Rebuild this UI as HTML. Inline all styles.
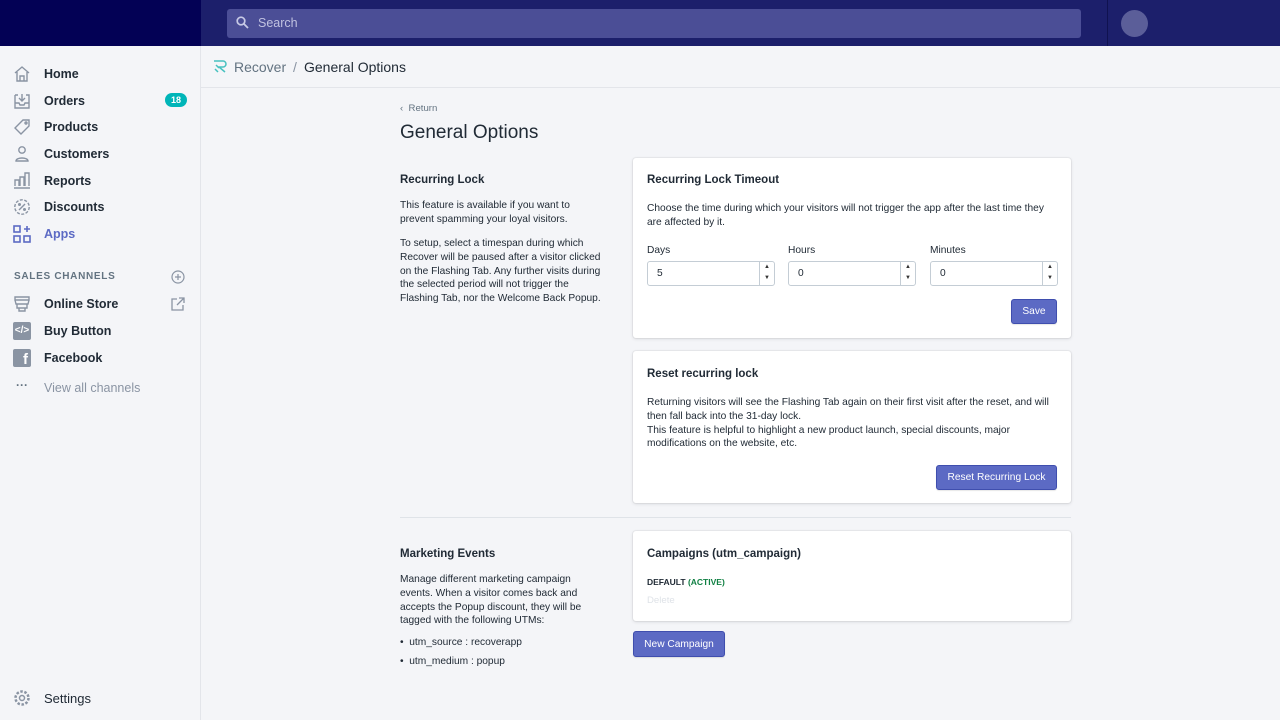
<!DOCTYPE html>
<html><head><meta charset="utf-8"><style>
*{box-sizing:border-box;margin:0;padding:0}
body{width:1280px;height:720px;overflow:hidden;background:#f4f5f8;font-family:"Liberation Sans",sans-serif;color:#212b36;position:relative}
.a{position:absolute}
.top{left:0;top:0;width:1280px;height:46px;background:#1c1f6b}
.topl{left:0;top:0;width:201px;height:46px;background:#030155}
.search{left:227px;top:9px;width:854px;height:29px;background:#4b4e96;border-radius:3px;color:#c0c2e0;font-size:12.5px;line-height:29px;padding-left:31px}
.side{left:0;top:46px;width:201px;height:674px;border-right:1px solid #e3e5ea;background:#f4f5f8}
.nav{left:44px;font-size:12.5px;font-weight:bold;color:#212b36}
.ic{left:13px;width:18px;height:18px}
.hdr{left:201px;top:46px;width:1079px;height:42px;border-bottom:1px solid #e3e5ea}
.card{background:#fff;left:633px;width:438px;border-radius:3px;box-shadow:0 0 0 1px rgba(63,63,68,.05),0 1px 3px rgba(63,63,68,.15)}
.h{font-size:11.5px;font-weight:bold;color:#212b36}
.p{font-size:10.2px;line-height:13.8px;color:#212b36}
.btn{background:#5c6ac4;color:#fff;font-size:10.2px;text-align:center;border-radius:3px;border:1px solid #3f4eae;box-shadow:0 1px 1px rgba(0,0,0,.1)}
.inp{width:128px;height:25px;border:1px solid #c4cdd5;border-radius:3px;font-size:10.2px;line-height:23px;padding-left:9px;background:#fff}
.sp{position:absolute;right:0;top:0;width:15px;height:23px;border-left:1px solid #c4cdd5;font-size:6px;line-height:11px;text-align:center;color:#333}
.lab{font-size:10.2px}
</style></head><body>
<div class="a top"></div><div class="a topl"></div>
<div class="a search">Search</div>
<svg class="a" style="left:236px;top:16px" width="13" height="13" viewBox="0 0 13 13"><circle cx="5" cy="5" r="3.8" fill="none" stroke="#c8cae6" stroke-width="1.7"/><path d="M8 8l4 4" stroke="#c8cae6" stroke-width="1.8"/></svg>
<div class="a" style="left:1107px;top:0;width:1px;height:46px;background:#101250"></div>
<div class="a" style="left:1121px;top:10px;width:27px;height:27px;border-radius:50%;background:#5b5e99"></div>

<div class="a side"></div>
<svg class="a ic" style="top:65px" viewBox="0 0 18 18" fill="none" stroke="#8a94a3" stroke-width="1.4"><path d="M2 8L9 2l7 6M4 7v9h10V7M7 16v-5h4v5"/></svg>
<div class="a nav" style="top:67px">Home</div>
<svg class="a ic" style="top:92px" viewBox="0 0 18 18" fill="none" stroke="#8a94a3" stroke-width="1.4"><path d="M2 3h3M13 3h3v13H2V3M2 11h4l1 2h4l1-2h4M9 2v7M6 6l3 3 3-3"/></svg>
<div class="a nav" style="top:94px">Orders</div>
<div class="a" style="left:165px;top:93px;width:22px;height:14px;border-radius:7px;background:#00b5b8;color:#fff;font-size:9px;font-weight:bold;text-align:center;line-height:14px">18</div>
<svg class="a ic" style="top:118px" viewBox="0 0 18 18" fill="none" stroke="#8a94a3" stroke-width="1.4"><path d="M10 2h6v6l-8 8-6-6z"/><circle cx="13" cy="5" r="1"/></svg>
<div class="a nav" style="top:120px">Products</div>
<svg class="a ic" style="top:145px" viewBox="0 0 18 18" fill="none" stroke="#8a94a3" stroke-width="1.4"><circle cx="9" cy="5" r="3.2"/><path d="M3 16c0-4 12-4 12 0z"/></svg>
<div class="a nav" style="top:147px">Customers</div>
<svg class="a ic" style="top:171px" viewBox="0 0 18 18" fill="none" stroke="#8a94a3" stroke-width="1.4"><path d="M1 17h16M2 15V9h4v6M7 15V6h4v9M12 15V2h4v13"/></svg>
<div class="a nav" style="top:174px">Reports</div>
<svg class="a ic" style="top:198px" viewBox="0 0 18 18" fill="none" stroke="#8a94a3" stroke-width="1.4"><circle cx="9" cy="9" r="7.2" stroke-dasharray="3 1.5"/><path d="M6 12l6-6"/><circle cx="6.5" cy="6.5" r=".8"/><circle cx="11.5" cy="11.5" r=".8"/></svg>
<div class="a nav" style="top:200px">Discounts</div>
<svg class="a ic" style="top:225px" viewBox="0 0 18 18" fill="none" stroke="#5c6ac4" stroke-width="1.6"><rect x="1" y="1" width="6" height="6"/><rect x="1" y="11" width="6" height="6"/><rect x="11" y="11" width="6" height="6"/><path d="M14 1v6M11 4h6"/></svg>
<div class="a nav" style="top:227px;color:#5c6ac4">Apps</div>
<div class="a" style="left:14px;top:271px;font-size:10px;font-weight:bold;letter-spacing:.7px;color:#637381">SALES CHANNELS</div>
<svg class="a" style="left:171px;top:270px" width="14" height="14" viewBox="0 0 14 14" fill="none" stroke="#8a94a3" stroke-width="1.2"><circle cx="7" cy="7" r="6"/><path d="M7 4v6M4 7h6"/></svg>
<svg class="a ic" style="top:295px" viewBox="0 0 18 18" fill="none" stroke="#8a94a3" stroke-width="1.4"><path d="M2 2h14v3H2zM2 5l1 4h12l1-4M4 9v4h10V9M6 13v3h6v-3"/></svg>
<div class="a nav" style="top:297px">Online Store</div>
<svg class="a" style="left:171px;top:297px" width="14" height="14" viewBox="0 0 14 14" fill="none" stroke="#8a94a3" stroke-width="1.3"><path d="M6 2H1v11h11V8M8 1h5v5M13 1L6 8"/></svg>
<div class="a" style="left:13px;top:322px;width:18px;height:18px;background:#8a94a3;border-radius:2px;color:#fff;font-size:10px;font-weight:bold;text-align:center;line-height:18px">&lt;/&gt;</div>
<div class="a nav" style="top:324px">Buy Button</div>
<div class="a" style="left:13px;top:349px;width:18px;height:18px;background:#8a94a3;border-radius:2px;color:#fff;font-size:15px;font-weight:bold;text-align:right;padding-right:3px;line-height:22px;overflow:hidden">f</div>
<div class="a nav" style="top:351px">Facebook</div>
<div class="a" style="left:16px;top:378px;font-size:12px;color:#637381;font-weight:bold">···</div>
<div class="a" style="left:44px;top:381px;font-size:12.5px;color:#8a94a3">View all channels</div>
<svg class="a ic" style="top:689px" viewBox="0 0 18 18" fill="none" stroke="#8a94a3" stroke-width="1.5"><circle cx="9" cy="9" r="2.5"/><circle cx="9" cy="9" r="6.5" stroke-dasharray="2.5 1.6" stroke-width="2.5"/></svg>
<div class="a nav" style="top:691px;font-weight:normal;font-size:13px">Settings</div>

<div class="a hdr"></div>
<svg class="a" style="left:213px;top:59px" width="16" height="14" viewBox="0 0 16 14" fill="none" stroke="#47c1bf" stroke-width="1.5"><path d="M1 2h9a3 3 0 010 6H6l6 5M3 6l3 3M2 10l3 3"/></svg>
<div class="a" style="left:234px;top:59px;font-size:14px;color:#637381">Recover</div>
<div class="a" style="left:293px;top:59px;font-size:14px;color:#8a94a3">/</div>
<div class="a" style="left:304px;top:59px;font-size:14px;color:#212b36">General Options</div>

<div class="a" style="left:400px;top:103px;font-size:9.6px;color:#637381">‹&nbsp; Return</div>
<div class="a" style="left:400px;top:122px;font-size:19px;color:#212b36">General Options</div>

<div class="a h" style="left:400px;top:174px">Recurring Lock</div>
<div class="a p" style="left:400px;top:199px;width:205px">This feature is available if you want to prevent spamming your loyal visitors.</div>
<div class="a p" style="left:400px;top:237px;width:210px">To setup, select a timespan during which Recover will be paused after a visitor clicked on the Flashing Tab. Any further visits during the selected period will not trigger the Flashing Tab, nor the Welcome Back Popup.</div>

<div class="a card" style="top:158px;height:180px"></div>
<div class="a h" style="left:647px;top:174px">Recurring Lock Timeout</div>
<div class="a p" style="left:647px;top:202px;width:412px">Choose the time during which your visitors will not trigger the app after the last time they are affected by it.</div>
<div class="a lab" style="left:647px;top:245px">Days</div>
<div class="a lab" style="left:788px;top:245px">Hours</div>
<div class="a lab" style="left:930px;top:245px">Minutes</div>
<div class="a inp" style="left:647px;top:261px">5<div class="sp">▲<br>▼</div></div>
<div class="a inp" style="left:788px;top:261px">0<div class="sp">▲<br>▼</div></div>
<div class="a inp" style="left:930px;top:261px">0<div class="sp">▲<br>▼</div></div>
<div class="a btn" style="left:1011px;top:299px;width:46px;height:25px;line-height:24px">Save</div>

<div class="a card" style="top:351px;height:152px"></div>
<div class="a h" style="left:647px;top:368px">Reset recurring lock</div>
<div class="a p" style="left:647px;top:396px;width:412px">Returning visitors will see the Flashing Tab again on their first visit after the reset, and will then fall back into the 31-day lock.<br>This feature is helpful to highlight a new product launch, special discounts, major modifications on the website, etc.</div>
<div class="a btn" style="left:936px;top:465px;width:121px;height:25px;line-height:24px">Reset Recurring Lock</div>

<div class="a" style="left:400px;top:517px;width:671px;height:1px;background:#dfe3e8"></div>

<div class="a h" style="left:400px;top:548px">Marketing Events</div>
<div class="a p" style="left:400px;top:573px;width:190px">Manage different marketing campaign events. When a visitor comes back and accepts the Popup discount, they will be tagged with the following UTMs:</div>
<div class="a p" style="left:400px;top:636px">•&nbsp; utm_source : recoverapp</div>
<div class="a p" style="left:400px;top:655px">•&nbsp; utm_medium : popup</div>

<div class="a card" style="top:531px;height:90px"></div>
<div class="a h" style="left:647px;top:548px">Campaigns (utm_campaign)</div>
<div class="a" style="left:647px;top:577px;font-size:8.5px;font-weight:bold">DEFAULT <span style="color:#108043">(ACTIVE)</span></div>
<div class="a" style="left:647px;top:595px;font-size:9.6px;color:#dfe3e8">Delete</div>
<div class="a btn" style="left:633px;top:631px;width:92px;height:26px;line-height:25px">New Campaign</div>
</body></html>
